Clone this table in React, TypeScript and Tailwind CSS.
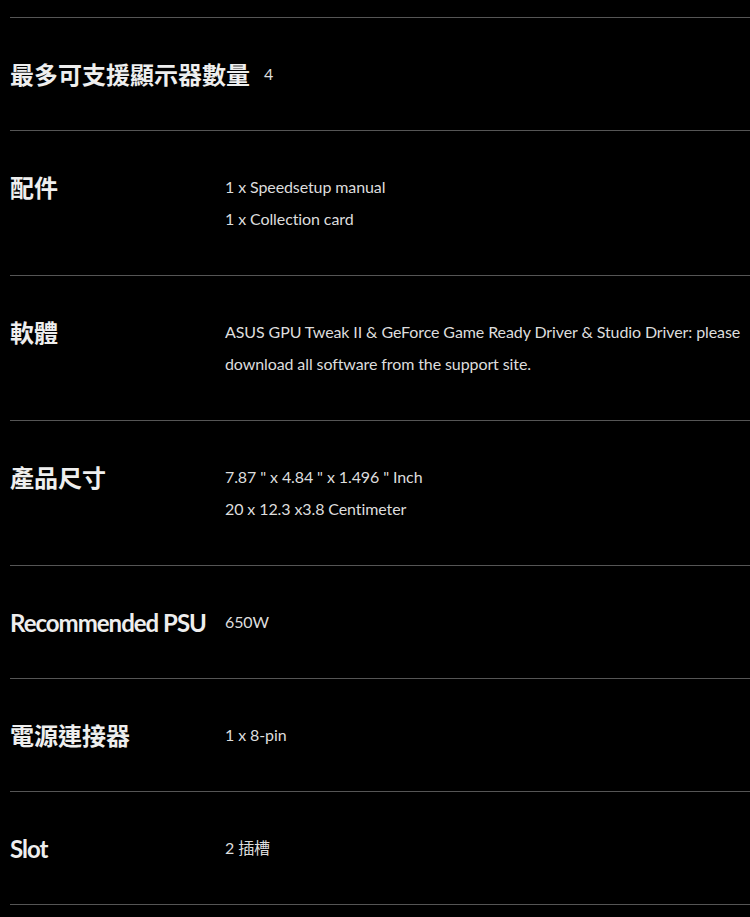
import React from "react";

const rows: { label: string; latin?: boolean; values: string[] }[] = [
  { label: "最多可支援顯示器數量", values: ["4"] },
  { label: "配件", values: ["1 x Speedsetup manual", "1 x Collection card"] },
  {
    label: "軟體",
    values: [
      "ASUS GPU Tweak II & GeForce Game Ready Driver & Studio Driver: please download all software from the support site.",
    ],
  },
  { label: "產品尺寸", values: ['7.87 " x 4.84 " x 1.496 " Inch', "20 x 12.3 x3.8 Centimeter"] },
  { label: "Recommended PSU", latin: true, values: ["650W"] },
  { label: "電源連接器", values: ["1 x 8-pin"] },
  { label: "Slot", latin: true, values: ["2 插槽"] },
];

export default function App() {
  return (
    <div className="min-h-[917px] bg-black pt-[17px] pl-[10px] overflow-hidden">
      <div className="border-t border-[#555555]">
        {rows.map((r) => (
          <div key={r.label} className="flex border-b border-[#555555] py-[40px]">
            <div
              className={
                r.latin
                  ? "min-w-[215px] shrink-0 pr-[14px] pt-[1px] text-[24px] font-bold leading-[31px] tracking-[-1px] text-[#eeeeee]"
                  : "min-w-[215px] shrink-0 pr-[14px] pt-[1px] text-[24px] font-bold leading-[31px] text-[#eeeeee]"
              }
              style={{ fontFamily: 'Lato, "Noto Sans CJK TC", sans-serif' }}
            >
              {r.label}
            </div>
            <div
              className="text-[16px] leading-[32px] tracking-[-0.1px] text-[#dddddd]"
              style={{ fontFamily: 'Lato, "Noto Sans CJK TC", sans-serif' }}
            >
              {r.values.map((v) => (
                <div key={v}>{v}</div>
              ))}
            </div>
          </div>
        ))}
      </div>
    </div>
  );
}
